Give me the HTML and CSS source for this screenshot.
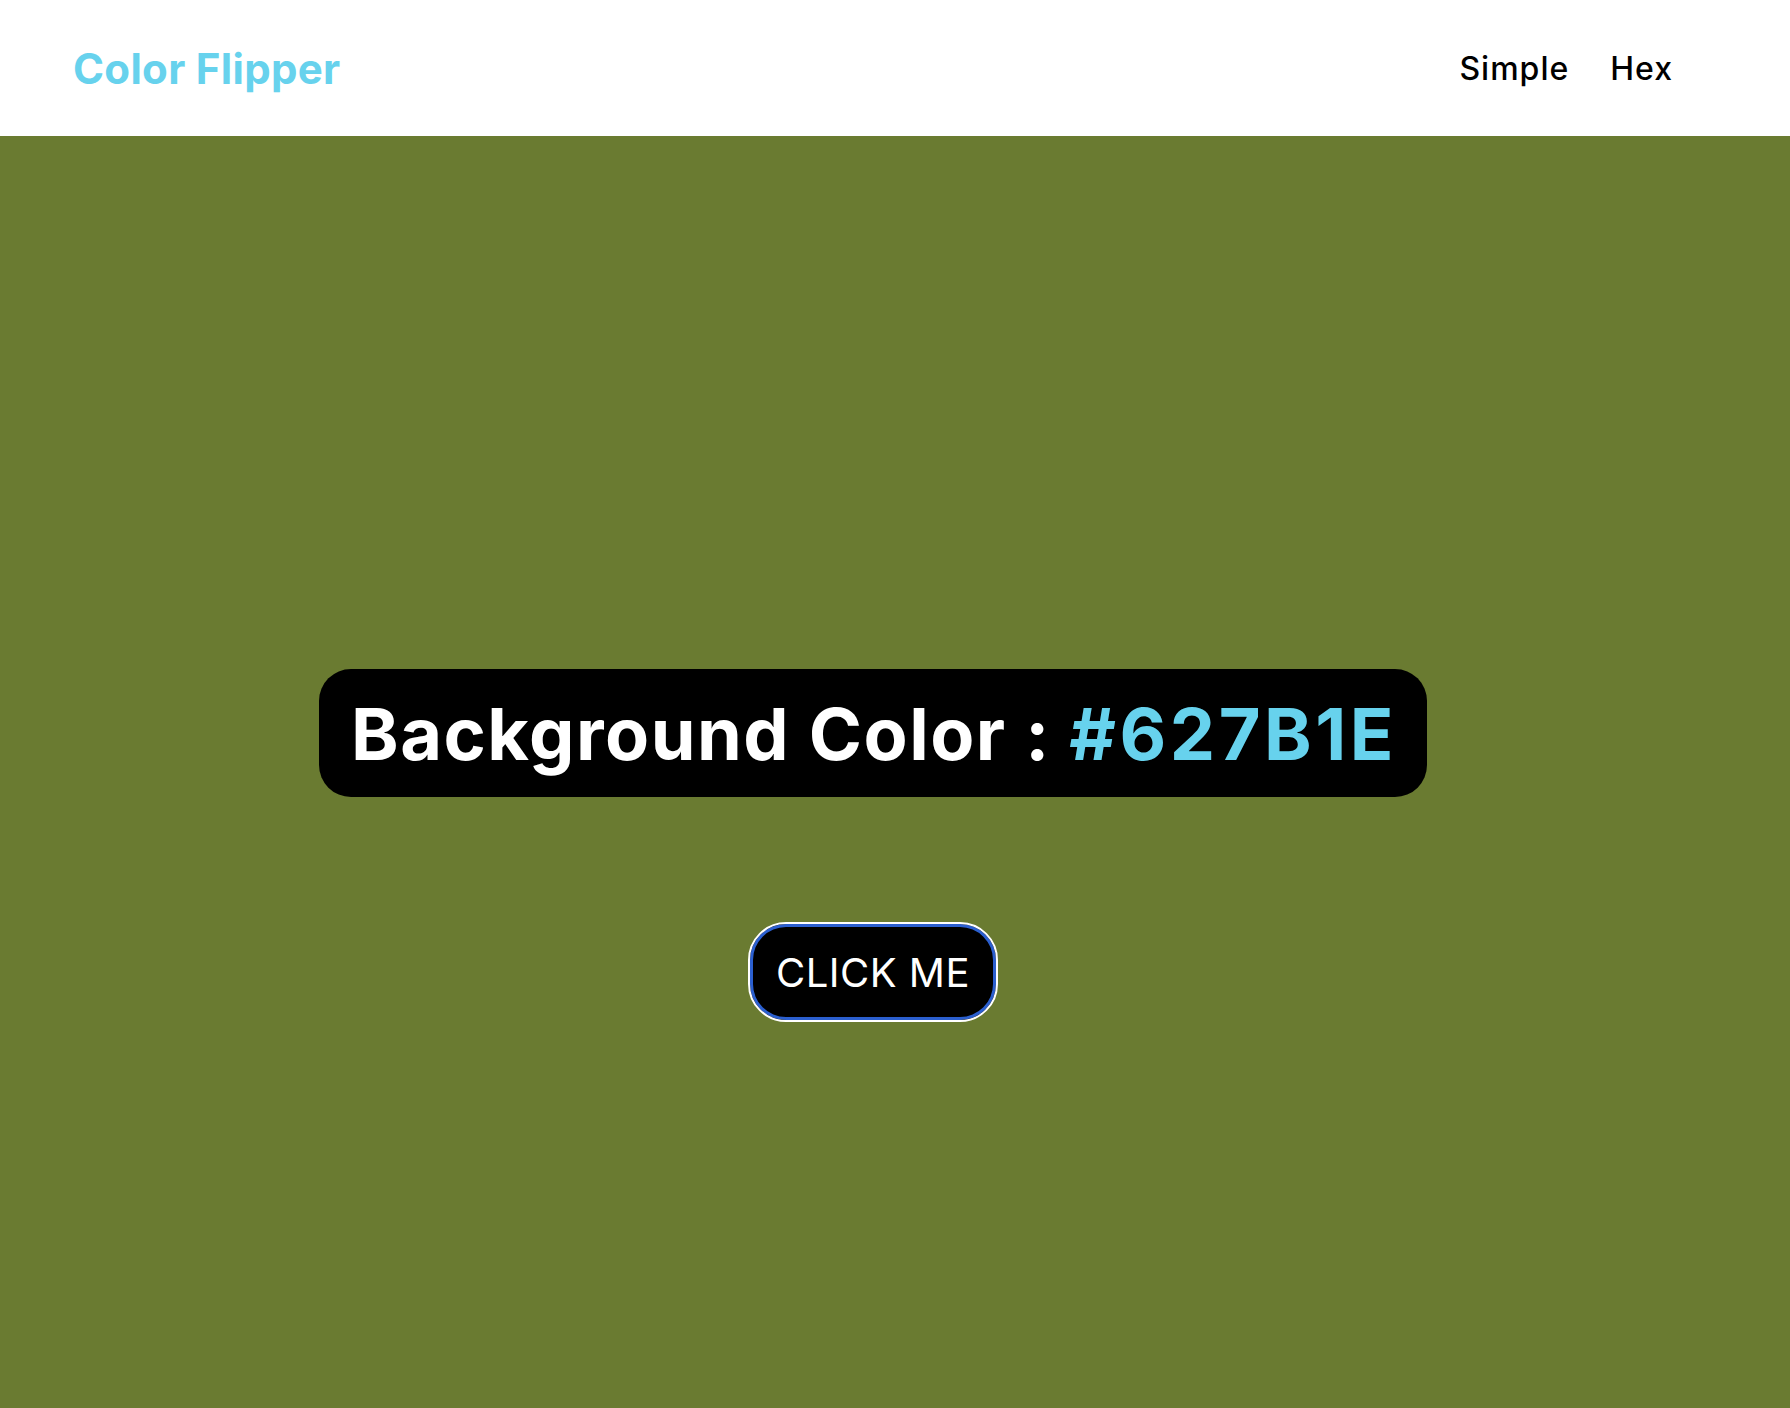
FILE: index.html
```html
<!DOCTYPE html>
<html lang="en">
<head>
<meta charset="utf-8">
<title>Color Flipper</title>
<link rel="stylesheet" href="styles.css">
</head>
<body>
<header class="topbar">
  <div class="logo">Color Flipper</div>
  <nav class="nav">
    <a class="nav-link" href="#">Simple</a>
    <a class="nav-link" href="#">Hex</a>
  </nav>
</header>
<main class="stage">
  <h2 class="label">Background Color : <span class="hex">#627B1E</span></h2>
  <button class="btn" type="button">CLICK ME</button>
</main>
</body>
</html>
```
FILE: styles.css
```css
* { box-sizing: border-box; }
html, body { margin: 0; padding: 0; }
body {
  font-family: Inter, "Noto Sans", sans-serif;
  background: #6a7b31;
  overflow: hidden;
}
.topbar {
  height: 136px;
  background: #ffffff;
  display: flex;
  align-items: center;
  justify-content: space-between;
  padding: 0 117px 0 73px;
}
.logo {
  color: #67d2ed;
  font-weight: 700;
  font-size: 42px;
  letter-spacing: 0.3px;
}
.nav {
  display: flex;
  gap: 41px;
}
.nav-link {
  color: #000;
  text-decoration: none;
  font-size: 32px;
  font-weight: 500;
  letter-spacing: 1px;
}
.stage {
  height: 1272px;
  display: flex;
  flex-direction: column;
  align-items: center;
  padding: 533px 44px 0 0;
}
.label {
  margin: 0;
  background: #000;
  color: #fff;
  font-size: 72px;
  font-weight: 700;
  height: 128px;
  display: flex;
  align-items: center;
  padding: 0 30px 0 32px;
  border-radius: 32px;
  letter-spacing: 1.5px;
  white-space: pre;
}
.hex {
  color: #67d2ed;
  letter-spacing: 3.5px;
}
.btn {
  margin-top: 125px;
  width: 250px;
  height: 100px;
  background: #000;
  color: #fff;
  font-family: Inter, "Noto Sans", sans-serif;
  font-size: 40px;
  border: 2px solid #fff;
  border-radius: 38px;
  box-shadow: inset 0 0 0 3px #2b5fcf;
  letter-spacing: 0.5px;
  padding: 0;
}
```
